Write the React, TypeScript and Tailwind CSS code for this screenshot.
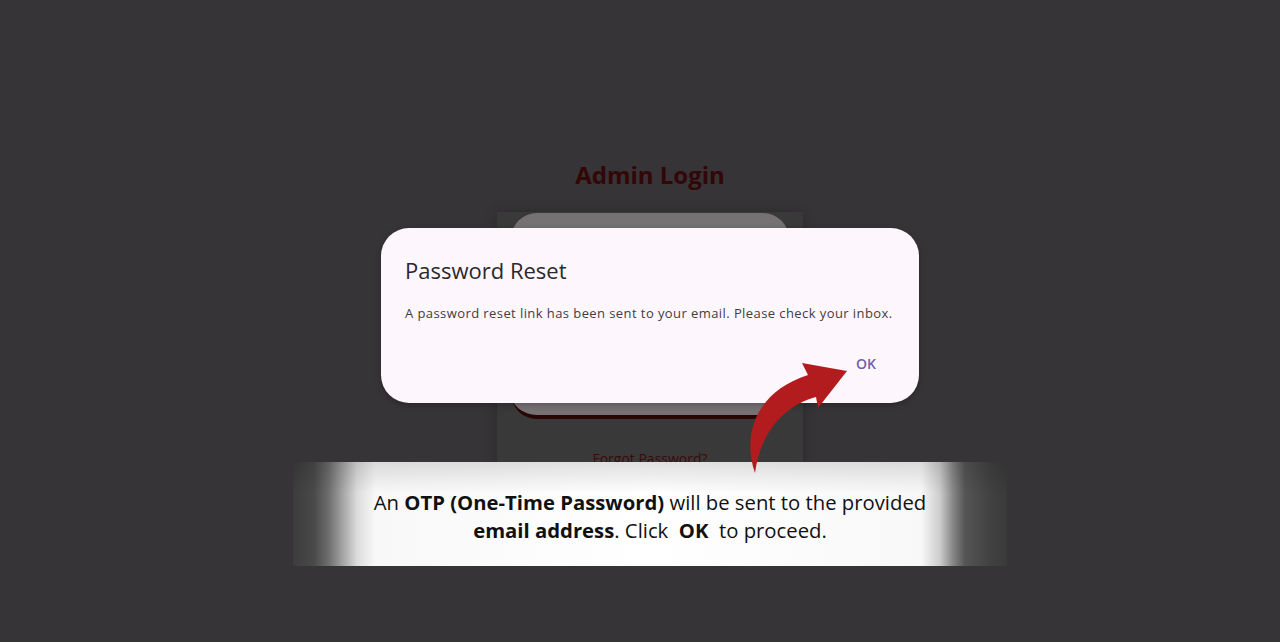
const Arrow = () => (
  <svg
    className="pointer-events-none absolute inset-0"
    width="1280"
    height="642"
    viewBox="0 0 1280 642"
  >
    <path
      d="M755 473 C741 432 758 391 808 375 L802 363 L847 371 L818 408 L816 397 C786 405 761 430 755 473 Z"
      fill="#b21c1e"
    />
  </svg>
);

const App = () => {
  return (
    <div className="relative h-[642px] w-full overflow-hidden bg-[#363436] font-['Open_Sans',sans-serif]">
      {/* LOGIN PAGE (dimmed) */}
      <div className="flex flex-col items-center pl-[20px] pt-[158px]">
        <h1 className="text-[24px] font-bold leading-[34px] text-[#330607]">
          Admin Login
        </h1>
        <div className="mt-[20px] flex h-[292px] w-[306px] flex-col items-center bg-[#393939] px-[14px] pt-[1px] shadow-[0_0_12px_rgba(0,0,0,0.2)]">
          <div className="h-[206px] w-full rounded-[26px] border-b-[4px] border-[#2b0505] bg-[#767173]" />
          <p className="mt-[30px] text-[14px] leading-[20px] text-[#3b0a0a]">
            Forgot Password?
          </p>
        </div>
      </div>

      {/* DIALOG */}
      <div className="absolute left-[381px] top-[228px] flex h-[175px] w-[538px] flex-col rounded-[28px] bg-[#fdf7fd] px-[24px] pt-[28px] shadow-[0_2px_6px_rgba(0,0,0,0.25)]">
        <h2 className="text-[22px] leading-[28px] text-[#2a282c]">
          Password Reset
        </h2>
        <p className="mt-[19px] whitespace-nowrap text-[13px] tracking-[0.42px] leading-[20px] text-[#3f3c43]">
          A password reset link has been sent to your email. Please check your inbox.
        </p>
        <div className="mt-[31px] flex justify-end pr-[17px]">
          <button className="px-[2px] text-[14px] font-semibold leading-[20px] text-[#6f5fb0]">
            OK
          </button>
        </div>
      </div>

      {/* TUTORIAL BANNER */}
      <div className="absolute left-[293px] top-[462px] h-[104px] w-[714px] bg-[linear-gradient(90deg,#3c3c3c_0%,#4a4a4a_3%,#6e6e6e_5%,#a5a5a5_7%,#dcdcdc_9%,#f8f8f8_11.5%,#ffffff_50%,#f8f8f8_88%,#cccccc_90.6%,#888888_92.4%,#555555_94.1%,#414141_97.6%,#3a3a3a_100%)]">
        <div className="flex h-full w-full flex-col items-center justify-center bg-[linear-gradient(180deg,rgba(0,0,0,0.12)_0%,rgba(0,0,0,0)_30%)] pt-[4px] text-[20.3px] leading-[28px] text-[#111111]">
          <p>
            An <b>OTP (One-Time Password)</b> will be sent to the provided
          </p>
          <p>
            <b>email address</b>. Click&nbsp; <b>OK</b>&nbsp; to proceed.
          </p>
        </div>
      </div>

      <Arrow />
    </div>
  );
};

export default App;
